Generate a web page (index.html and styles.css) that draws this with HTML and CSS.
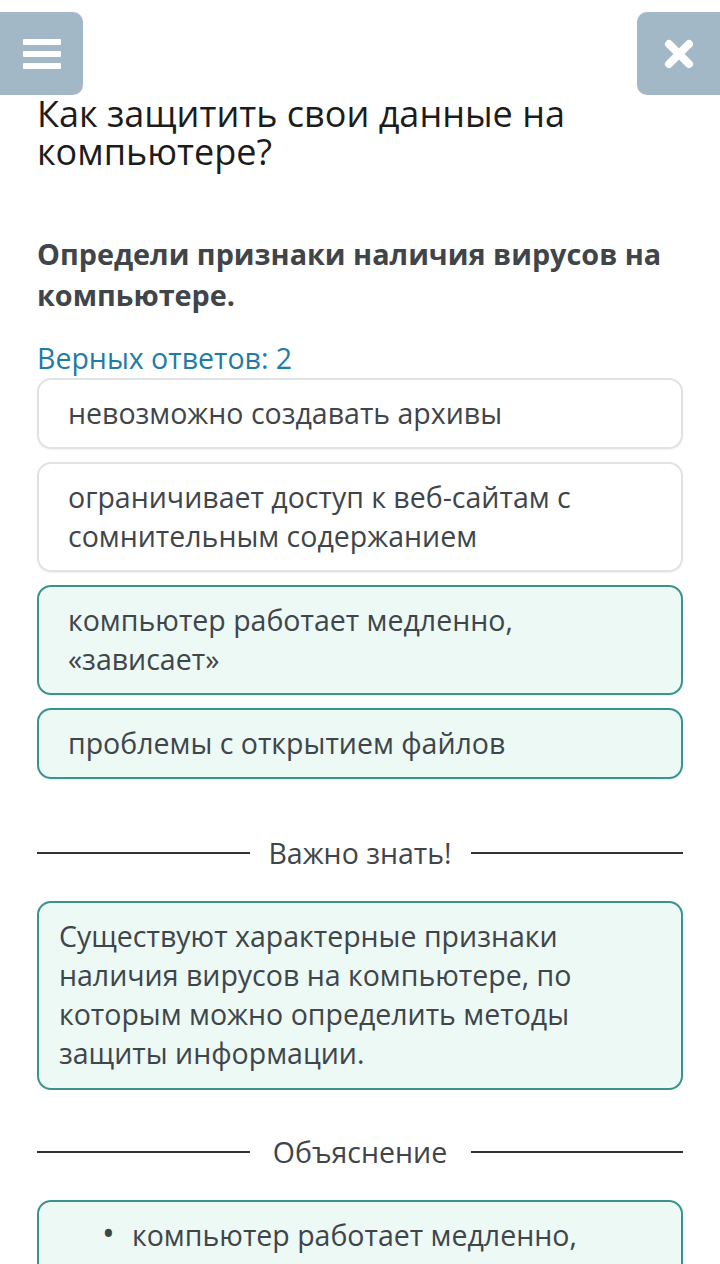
FILE: index.html
```html
<!DOCTYPE html>
<html lang="ru">
<head>
  <meta charset="UTF-8" />
  <meta name="viewport" content="width=device-width, initial-scale=1.0" />
  <title>Как защитить свои данные на компьютере?</title>
  <link rel="stylesheet" href="styles.css">
</head>
<body>

<div class="topbar">
  <button class="icon-btn menu-btn" aria-label="Меню">
    <svg width="38" height="30" viewBox="0 0 38 30">
      <rect x="0" y="0" width="38" height="6" rx="1" fill="#fff"/>
      <rect x="0" y="12" width="38" height="6" rx="1" fill="#fff"/>
      <rect x="0" y="24" width="38" height="6" rx="1" fill="#fff"/>
    </svg>
  </button>
  <button class="icon-btn close-btn" aria-label="Закрыть">
    <svg width="30" height="30" viewBox="0 0 30 30">
      <path d="M5 5 L25 25 M25 5 L5 25" stroke="#fff" stroke-width="8" stroke-linecap="round"/>
    </svg>
  </button>
</div>

<div class="page">
  <h1 class="title">Как защитить свои данные на компьютере?</h1>

  <p class="task">Определи признаки наличия вирусов на компьютере.</p>

  <div class="answers-count">Верных ответов: 2</div>

  <div class="options">
    <div class="option">невозможно создавать архивы</div>
    <div class="option">ограничивает доступ к веб-сайтам с сомнительным содержанием</div>
    <div class="option correct">компьютер работает медленно, «зависает»</div>
    <div class="option correct">проблемы с открытием файлов</div>
  </div>

  <div class="divider"><span>Важно знать!</span></div>

  <div class="note">Существуют характерные признаки наличия вирусов на компьютере, по которым можно определить методы защиты информации.</div>

  <div class="divider"><span>Объяснение</span></div>

  <div class="note explain">
    <ul>
      <li>компьютер работает медленно, «зависает»;</li>
      <li>проблемы с открытием файлов.</li>
    </ul>
  </div>
</div>

</body>
</html>
```

FILE: styles.css
```css
:root {
  --btn-bg: #a3b8c6;
  --text: #40454a;
  --title: #1c1c1c;
  --blue: #1f7ca6;
  --border: #e0e2e4;
  --green-bg: #ecf9f5;
  --green-border: #3a948a;
}
* { box-sizing: border-box; }

body {
  margin: 0;
  background: #fff;
  font-family: 'Open Sans', sans-serif;
  color: var(--text);
  overflow: hidden;
}

.topbar {
  display: flex;
  justify-content: space-between;
  padding-top: 12px;
  height: 95px;
}

.icon-btn {
  width: 83px;
  height: 83px;
  border: none;
  background: var(--btn-bg);
  display: flex;
  justify-content: center;
  align-items: center;
  padding: 0;
}

.menu-btn { border-radius: 0 10px 10px 0; }
.close-btn { border-radius: 10px 0 0 10px; }

.page {
  padding: 0 37px;
}

.title {
  margin: 0;
  font-size: 36px;
  font-weight: 400;
  line-height: 38px;
  color: var(--title);
}

.task {
  margin: 62px 0 0;
  font-size: 28.8px;
  font-weight: 700;
  line-height: 41px;
  color: var(--text);
}

.answers-count {
  margin-top: 25px;
  font-size: 28.5px;
  line-height: 36px;
  color: var(--blue);
}

.options {
  display: flex;
  flex-direction: column;
  gap: 13px;
  margin-top: 2px;
}

.option {
  border: 2px solid var(--border);
  border-radius: 14px;
  padding: 14px 29px 14px;
  font-size: 28.5px;
  line-height: 39px;
  color: var(--text);
  box-shadow: 0 1px 2px rgba(0,0,0,0.06);
}

.option.correct {
  background: var(--green-bg);
  border-color: var(--green-border);
}

.divider {
  display: flex;
  align-items: center;
  margin-top: 55px;
  font-size: 28.5px;
  line-height: 38px;
  color: var(--text);
}

.divider span {
  width: 221px;
  text-align: center;
}

.divider::before,
.divider::after {
  content: "";
  flex: 1;
  height: 2px;
  background: #333;
}

.note {
  margin-top: 29px;
  background: var(--green-bg);
  border: 2px solid var(--green-border);
  border-radius: 14px;
  padding: 14px 20px 15px;
  font-size: 28.5px;
  line-height: 39px;
  color: var(--text);
}

.note + .divider { margin-top: 43px; }

.explain ul {
  margin: 0;
  padding-left: 76px;
  list-style: none;
}

.explain li::before {
  content: "•";
  display: inline-block;
  width: 30px;
  margin-left: -33px;
  font-size: 34px;
  line-height: 0;
}
```
